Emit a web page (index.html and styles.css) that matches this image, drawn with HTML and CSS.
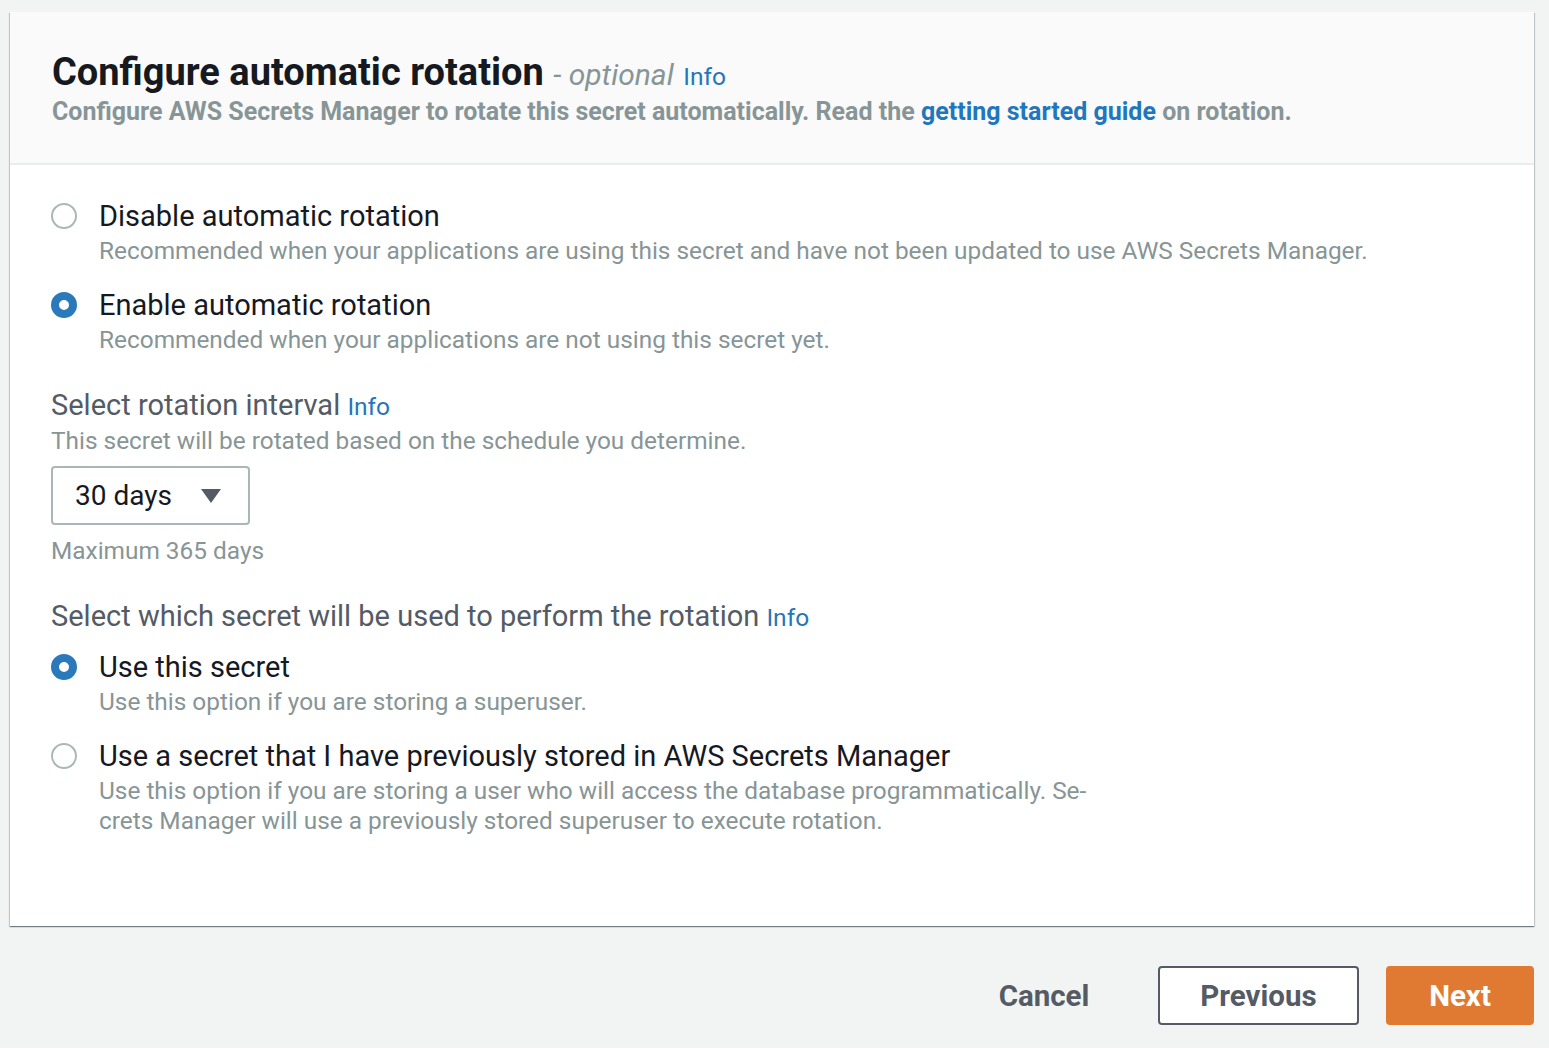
FILE: index.html
```html
<!DOCTYPE html>
<html lang="en">
<head>
<meta charset="utf-8">
<title>Configure automatic rotation</title>
<link rel="stylesheet" href="styles.css">
</head>
<body>
<div class="page">
  <section class="card">
    <header class="card-header">
      <h2 class="title">Configure automatic rotation <span class="optional">- optional</span> <a class="info" href="#">Info</a></h2>
      <p class="subtitle">Configure AWS Secrets Manager to rotate this secret automatically. Read the <a href="#" class="link">getting started guide</a> on rotation.</p>
    </header>
    <div class="card-body">
      <div class="radio-group">
        <label class="option">
          <span class="radio"></span>
          <span class="option-text">
            <span class="option-label">Disable automatic rotation</span>
            <span class="desc">Recommended when your applications are using this secret and have not been updated to use AWS Secrets Manager.</span>
          </span>
        </label>
        <label class="option">
          <span class="radio checked"></span>
          <span class="option-text">
            <span class="option-label">Enable automatic rotation</span>
            <span class="desc">Recommended when your applications are not using this secret yet.</span>
          </span>
        </label>
      </div>

      <div class="field">
        <div class="field-label">Select rotation interval <a class="info" href="#">Info</a></div>
        <div class="desc">This secret will be rotated based on the schedule you determine.</div>
        <div class="select">
          <span class="select-value">30 days</span>
          <svg class="caret" width="20" height="14" viewBox="0 0 20 14"><path d="M0 0H20L10 14Z" fill="#545b64"/></svg>
        </div>
        <div class="desc hint">Maximum 365 days</div>
      </div>

      <div class="field field-second">
        <div class="field-label">Select which secret will be used to perform the rotation <a class="info" href="#">Info</a></div>
        <div class="radio-group tight">
          <label class="option">
            <span class="radio checked"></span>
            <span class="option-text">
              <span class="option-label">Use this secret</span>
              <span class="desc">Use this option if you are storing a superuser.</span>
            </span>
          </label>
          <label class="option">
            <span class="radio"></span>
            <span class="option-text">
              <span class="option-label">Use a secret that I have previously stored in AWS Secrets Manager</span>
              <span class="desc wrap">Use this option if you are storing a user who will access the database programmatically. Se-<br>crets Manager will use a previously stored superuser to execute rotation.</span>
            </span>
          </label>
        </div>
      </div>
    </div>
  </section>

  <div class="actions">
    <button class="btn btn-link">Cancel</button>
    <button class="btn btn-normal">Previous</button>
    <button class="btn btn-primary">Next</button>
  </div>
</div>
</body>
</html>
```

FILE: styles.css
```css
* { box-sizing: border-box; }
html, body { margin: 0; padding: 0; }
body {
  background: #ffffff;
  font-family: Roboto, "Liberation Sans", Arial, sans-serif;
  color: #16191f;
}
.page {
  background: #f2f3f3;
  height: 1048px;
  padding: 12px 15px 0 10px;
}
.card {
  background: #ffffff;
  box-shadow: 0 1px 1px 0 rgba(0, 28, 36, 0.35), 1px 1px 1px 0 rgba(0, 28, 36, 0.15), -1px 1px 1px 0 rgba(0, 28, 36, 0.15);
}
.card-header {
  background: #fafafa;
  border-bottom: 2px solid #eaeded;
  padding: 38px 40px 35px 42px;
}
.title {
  margin: 0;
  font-size: 38px;
  line-height: 44px;
  font-weight: 700;
  color: #16191f;
}
.optional {
  font-style: italic;
  font-weight: 400;
  font-size: 30px;
  color: #879596;
}
.info {
  color: #1f77bd;
  text-decoration: none;
  font-weight: 400;
  font-size: 24.5px;
}
.subtitle {
  margin: -3px 0 0;
  font-size: 25px;
  line-height: 32px;
  font-weight: 700;
  color: #879596;
}
.link { color: #1f77bd; text-decoration: none; }

.card-body {
  padding: 33px 40px 90px 41px;
}
.radio-group {
  display: flex;
  flex-direction: column;
  gap: 21px;
}
.radio-group.tight { margin-top: 14px; }
.option {
  display: flex;
  gap: 22px;
  align-items: flex-start;
}
.radio {
  flex: none;
  width: 26px;
  height: 26px;
  margin-top: 5px;
  border-radius: 50%;
  border: 2px solid #aab7b8;
  background: #fff;
}
.radio.checked {
  border: 8px solid #2a7abb;
  background: #fff;
}
.option-text {
  display: flex;
  flex-direction: column;
}
.option-label {
  font-size: 29px;
  line-height: 36px;
  color: #16191f;
}
.desc {
  display: block;
  font-size: 24.4px;
  line-height: 30px;
  padding-top: 2px;
  color: #879596;
}
.field { margin-top: 33px; }
.field.field-second { margin-top: 33px; }
.field-label {
  font-size: 29px;
  line-height: 34px;
  color: #545b64;
}
.select {
  margin-top: 10px;
  width: 199px;
  height: 59px;
  border: 2px solid #aab7b8;
  border-radius: 4px;
  display: flex;
  align-items: center;
  justify-content: space-between;
  padding: 0 27px 0 22px;
  background: #fff;
}
.select-value {
  font-size: 28px;
  color: #16191f;
}
.hint { margin-top: 9px; }

.actions {
  display: flex;
  justify-content: flex-end;
  align-items: center;
  margin-top: 40px;
}
.btn {
  font-family: inherit;
  font-size: 29.5px;
  font-weight: 700;
  height: 59px;
  border-radius: 4px;
  cursor: pointer;
}
.btn-link {
  width: 160px;
  margin-right: 34px;
  background: transparent;
  border: none;
  color: #545b64;
}
.btn-normal {
  width: 201px;
  margin-right: 27px;
  background: #fff;
  border: 2px solid #545b64;
  color: #545b64;
}
.btn-primary {
  width: 148px;
  background: #e07a32;
  border: 2px solid #e07a32;
  color: #fff;
}
```
